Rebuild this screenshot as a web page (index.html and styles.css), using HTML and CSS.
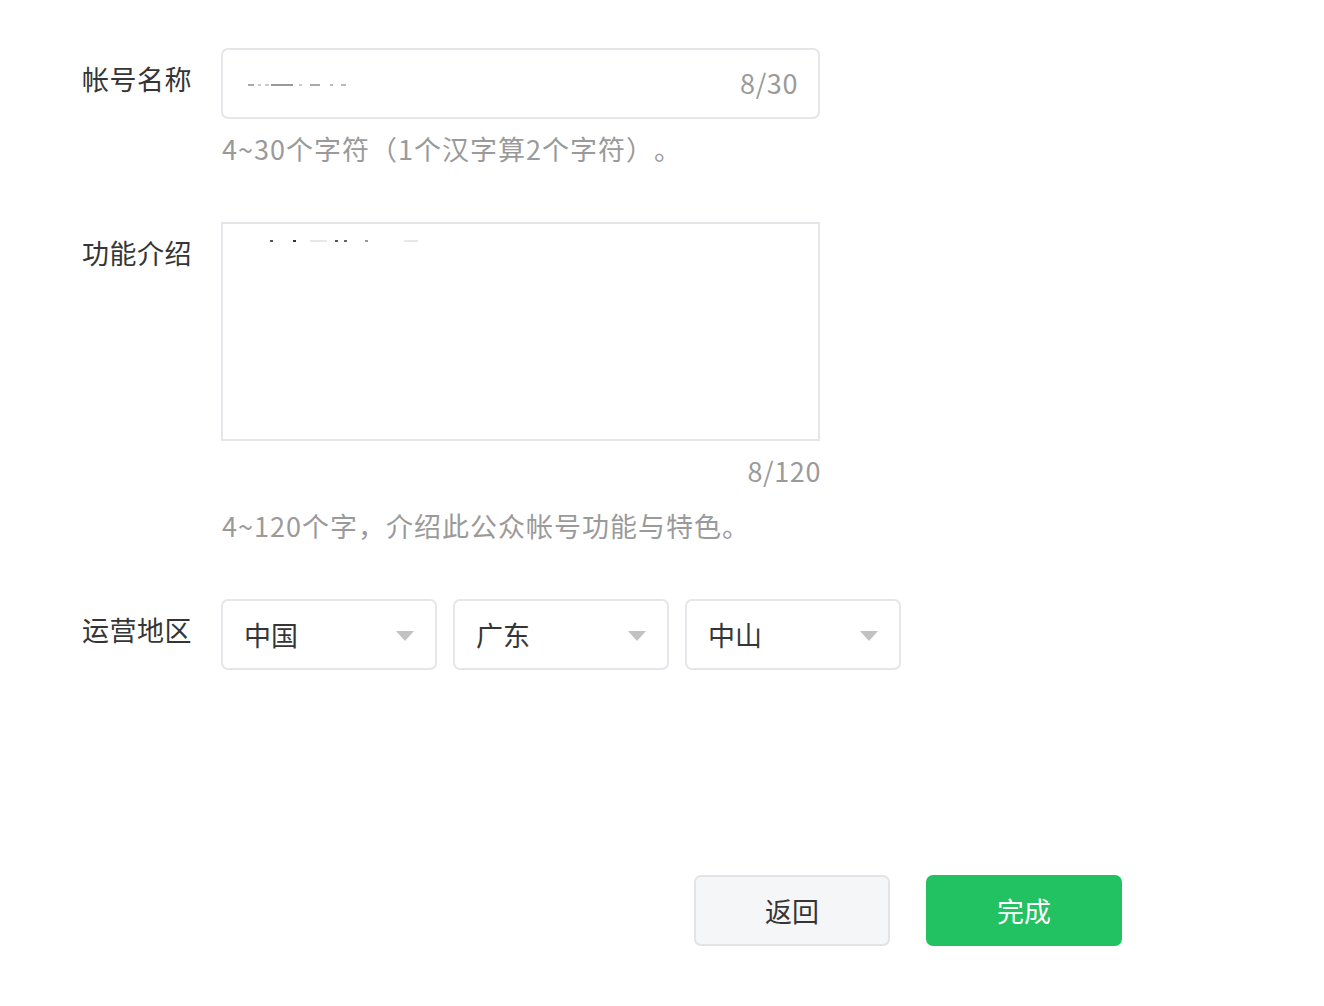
FILE: index.html
```html
<!DOCTYPE html>
<html lang="zh-CN">
<head>
<meta charset="utf-8">
<title>帐号信息</title>
<link rel="stylesheet" href="styles.css">
</head>
<body>
<div class="page">
  <div class="row row-name">
    <div class="label">帐号名称</div>
    <div class="field">
      <div class="input">
        <div class="ghost ghost-name">
          <i class="g1"></i><i class="g2"></i><i class="g3"></i><i class="g4"></i><i class="g5"></i><i class="g6"></i><i class="g7"></i><i class="g8"></i>
        </div>
        <span class="count">8/30</span>
      </div>
      <div class="hint">4~30个字符（1个汉字算2个字符）。</div>
    </div>
  </div>

  <div class="row row-intro">
    <div class="label">功能介绍</div>
    <div class="field">
      <div class="textarea">
        <div class="ghost ghost-intro">
          <i class="t1"></i><i class="t2"></i><i class="t3"></i><i class="t4"></i><i class="t5"></i><i class="t6"></i><i class="t7"></i>
        </div>
      </div>
      <div class="count-below">8/120</div>
      <div class="hint hint-intro">4~120个字，介绍此公众帐号功能与特色。</div>
    </div>
  </div>

  <div class="row row-region">
    <div class="label">运营地区</div>
    <div class="selects">
      <div class="select"><span>中国</span><i class="caret"></i></div>
      <div class="select"><span>广东</span><i class="caret"></i></div>
      <div class="select"><span>中山</span><i class="caret"></i></div>
    </div>
  </div>

  <div class="actions">
    <button class="btn btn-back">返回</button>
    <button class="btn btn-done">完成</button>
  </div>
</div>
</body>
</html>
```

FILE: styles.css
```css
html, body {
  margin: 0;
  padding: 0;
  background: #ffffff;
}
body {
  font-family: "Noto Sans CJK SC", "Noto Sans", sans-serif;
  color: #353535;
  text-spacing-trim: space-all;
}
.page {
  padding: 48px 0 0 82px;
  width: 1240px;
  box-sizing: border-box;
}
.row {
  display: flex;
  align-items: flex-start;
}
.label {
  width: 139px;
  flex: none;
  font-size: 27px;
  line-height: 1;
  color: #353535;
  letter-spacing: 0.5px;
}
.row-name .label { margin-top: 17px; }
.row-intro { margin-top: 57px; }
.row-intro .label { margin-top: 17px; }
.row-region { margin-top: 57px; }
.row-region .label { margin-top: 17px; }

.field {
  width: 599px;
  flex: none;
}
.input {
  height: 71px;
  box-sizing: border-box;
  border: 2px solid #e6e6ea;
  border-radius: 7px;
  display: flex;
  align-items: center;
  justify-content: space-between;
  padding: 0 20px 0 25px;
}
.count {
  font-size: 27px;
  color: #9a9a9a;
  line-height: 1;
  margin-top: -2px;
  letter-spacing: 0.6px;
}
.hint {
  margin-top: 14px;
  font-size: 27px;
  color: #9a9a9a;
  line-height: 32px;
  padding-left: 1px;
  letter-spacing: 1px;
}
.textarea {
  height: 219px;
  box-sizing: border-box;
  border: 2px solid #e6e6ea;
  padding: 14px 0 0 47px;
}
.count-below {
  text-align: right;
  font-size: 27px;
  color: #9a9a9a;
  line-height: 32px;
  margin-top: 14px;
  letter-spacing: 0.6px;
  margin-right: -1px;
}
.hint-intro { margin-top: 23px; }

.ghost {
  display: flex;
  align-items: flex-end;
  height: 4px;
}
.ghost i {
  display: block;
  height: 2px;
  background: #b8b8b8;
  margin-right: 4px;
}
.ghost-name { margin-top: 0; }
.ghost-name .g1 { width: 6px; background: #aaa; }
.ghost-name .g2 { width: 3px; background: #ccc; }
.ghost-name .g3 { width: 4px; background: #ccc; margin-right: 2px; }
.ghost-name .g4 { width: 22px; background: #999; margin-right: 6px; }
.ghost-name .g5 { width: 3px; background: #ccc; margin-right: 8px; }
.ghost-name .g6 { width: 10px; background: #aaa; margin-right: 10px; }
.ghost-name .g7 { width: 3px; background: #bbb; margin-right: 8px; }
.ghost-name .g8 { width: 5px; background: #bbb; }

.ghost-intro i { height: 2px; }
.ghost-intro .t1 { width: 3px; background: #555; margin-right: 20px; }
.ghost-intro .t2 { width: 3px; background: #333; margin-right: 14px; }
.ghost-intro .t3 { width: 17px; background: #e8e8e8; margin-right: 8px; }
.ghost-intro .t4 { width: 3px; background: #555; margin-right: 6px; }
.ghost-intro .t5 { width: 3px; background: #666; margin-right: 18px; }
.ghost-intro .t6 { width: 3px; background: #999; margin-right: 36px; }
.ghost-intro .t7 { width: 14px; background: #e8e8e8; }

.selects {
  display: flex;
  gap: 16px;
}
.select {
  width: 216px;
  height: 71px;
  box-sizing: border-box;
  border: 2px solid #e6e6ea;
  border-radius: 7px;
  display: flex;
  align-items: center;
  justify-content: space-between;
  padding: 0 21px 0 21px;
  font-size: 27px;
  color: #353535;
}
.select span { line-height: 1; }
.caret {
  width: 0;
  height: 0;
  border-left: 9.5px solid transparent;
  border-right: 9.5px solid transparent;
  border-top: 10px solid #c2c2c2;
  margin-top: 2px;
}

.actions {
  display: flex;
  gap: 36px;
  margin-top: 205px;
  padding-left: 612px;
}
.btn {
  width: 196px;
  height: 71px;
  box-sizing: border-box;
  border-radius: 7px;
  font-family: "Noto Sans CJK SC", "Noto Sans", sans-serif;
  font-size: 27px;
  cursor: pointer;
  padding: 0;
  line-height: 1;
}
.btn-back {
  background: #f5f6f8;
  border: 2px solid #e3e3e6;
  color: #353535;
}
.btn-done {
  background: #22c161;
  border: 2px solid #22c161;
  color: #ffffff;
}
```
